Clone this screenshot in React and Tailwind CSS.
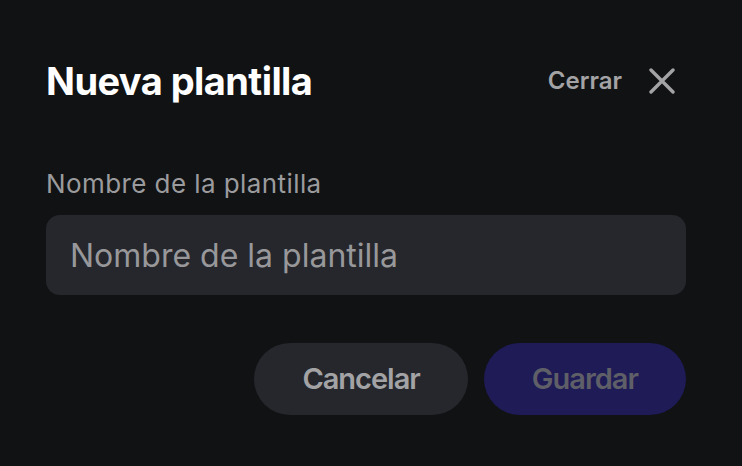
export default function App() {
  return (
    <div
      className="min-h-screen w-full bg-[#111214] text-white"
      style={{ fontFamily: "Inter, 'Noto Sans', sans-serif" }}
    >
      <div className="ml-[46px] w-[640px] pt-[57px]">
        <div className="flex h-[48px] items-center justify-between">
          <h2 className="text-[38px] font-bold leading-[48px] tracking-[-0.015em] text-white">
            Nueva plantilla
          </h2>
          <div className="flex items-center gap-[16px]">
            <span className="text-[24px] font-semibold text-[#a3a3a6]">Cerrar</span>
            <button className="flex h-[48px] w-[48px] items-center justify-center text-[#a3a3a6]">
              <svg width="26" height="26" viewBox="0 0 26 26" fill="none">
                <path
                  d="M2 2L24 24M24 2L2 24"
                  stroke="currentColor"
                  strokeWidth="3.4"
                  strokeLinecap="round"
                />
              </svg>
            </button>
          </div>
        </div>

        <label className="mt-[63px] block text-[26px] leading-[32px] tracking-[0.016em] text-[#9b9b9e]">
          Nombre de la plantilla
        </label>
        <input
          type="text"
          placeholder="Nombre de la plantilla"
          className="mt-[15px] h-[80px] w-full rounded-[14px] bg-[#25272c] px-[24px] text-[32px] text-white outline-none placeholder:text-[#98989b]"
        />

        <div className="mt-[48px] flex justify-end gap-[16px]">
          <button className="h-[72px] rounded-full bg-[#25272c] px-[48px] text-[29px] font-semibold tracking-[-0.035em] text-[#a3a3a6]">
            Cancelar
          </button>
          <button className="h-[72px] rounded-full bg-[#1e1b57] px-[48px] text-[29px] font-semibold tracking-[-0.035em] text-[#5f5f68]">
            Guardar
          </button>
        </div>
      </div>
    </div>
  );
}
